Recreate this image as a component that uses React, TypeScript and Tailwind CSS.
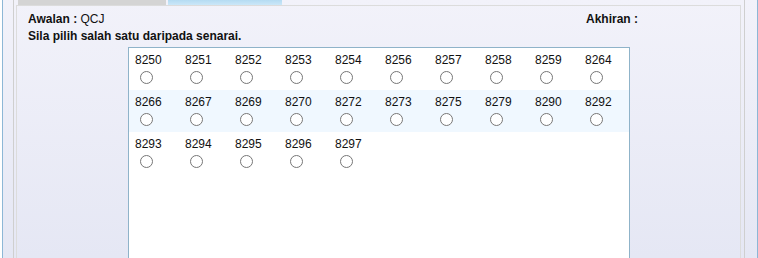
import React from 'react';

const rows: string[][] = [
  ['8250', '8251', '8252', '8253', '8254', '8256', '8257', '8258', '8259', '8264'],
  ['8266', '8267', '8269', '8270', '8272', '8273', '8275', '8279', '8290', '8292'],
  ['8293', '8294', '8295', '8296', '8297'],
];

const App: React.FC = () => {
  return (
    <div className="w-[758px] h-[258px] overflow-hidden bg-white font-['Liberation_Sans',Arial,sans-serif] text-[12px] text-[#111]">
      <div className="ml-[2px] w-[756px] h-full flex border-x border-[#8db7d6] bg-gradient-to-b from-[#f2f2fa] to-[#e5e7f4] pl-[10px] pr-[12px]">
        <div className="w-[732px] h-full flex flex-col border-x border-[#cfcfcf] pl-[2px] pr-[3px]">
          {/* tabs */}
          <div className="h-[5px] shrink-0 flex gap-[2px] pl-[2px]">
            <div className="w-[148px] bg-[#d4d4d4]" />
            <div className="w-[114px] bg-gradient-to-b from-[#b4dbf2] to-[#cbe7f8]" />
          </div>

          <div className="flex-1 min-h-0 border-t border-x border-[#dcdcdc] pl-[11px] pt-[6px]">
            <div className="flex leading-[14px]">
              <div className="w-[558px]">
                <span className="font-bold">Awalan : </span>QCJ
              </div>
              <div className="font-bold">Akhiran :</div>
            </div>
            <div className="mt-[3px] leading-[14px] font-bold">Sila pilih salah satu daripada senarai.</div>

            <div className="mt-[4px] ml-[100px] w-[502px] h-[220px] border border-[#8fb3c9] bg-white overflow-hidden">
              {rows.map((row, i) => (
                <div key={i} className={`h-[42px] flex pl-[6px] ${i === 1 ? 'bg-[#f0f8ff]' : ''}`}>
                  {row.map((code) => (
                    <label key={code} className="w-[50px] shrink-0 pt-[5px]">
                      <div className="leading-[14px]">{code}</div>
                      <input type="radio" name="pilih" value={code} className="block mt-[4px] ml-[5px] w-[13px] h-[13px]" />
                    </label>
                  ))}
                </div>
              ))}
            </div>
          </div>
        </div>
      </div>
    </div>
  );
};

export default App;
